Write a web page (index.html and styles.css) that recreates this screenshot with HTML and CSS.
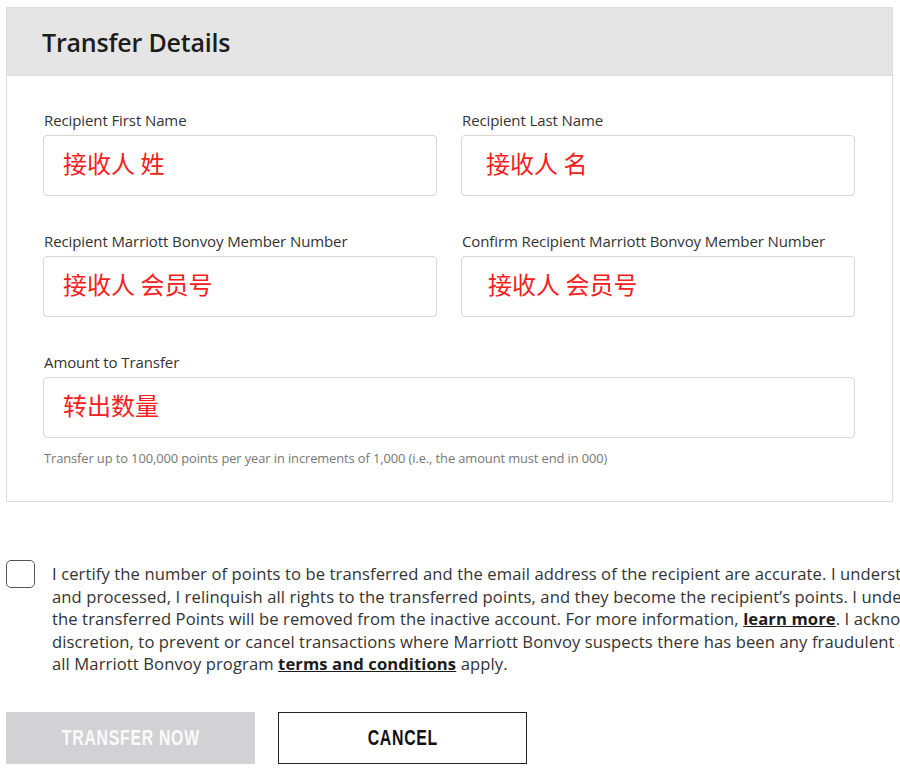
FILE: index.html
```html
<!DOCTYPE html>
<html>
<head>
<meta charset="utf-8">
<link rel="stylesheet" href="styles.css">
</head>
<body>
<div class="page">
  <section class="card">
    <header class="card-head"><h2>Transfer Details</h2></header>
    <div class="card-body">
      <div class="grid">
        <div class="field">
          <label>Recipient First Name</label>
          <div class="input"><span class="val">接收人 姓</span></div>
        </div>
        <div class="field">
          <label>Recipient Last Name</label>
          <div class="input right"><span class="val">接收人 名</span></div>
        </div>
        <div class="field">
          <label>Recipient Marriott Bonvoy Member Number</label>
          <div class="input"><span class="val">接收人 会员号</span></div>
        </div>
        <div class="field">
          <label>Confirm Recipient Marriott Bonvoy Member Number</label>
          <div class="input right2"><span class="val">接收人 会员号</span></div>
        </div>
        <div class="field full">
          <label>Amount to Transfer</label>
          <div class="input"><span class="val">转出数量</span></div>
          <p class="hint">Transfer up to 100,000 points per year in increments of 1,000 (i.e., the amount must end in 000)</p>
        </div>
      </div>
    </div>
  </section>

  <div class="certify">
    <span class="checkbox"></span>
    <p class="legal">I certify the number of points to be transferred and the email address of the recipient are accurate. I understand that once the transfer is submitted<br>and processed, I relinquish all rights to the transferred points, and they become the recipient’s points. I understand that if an account is inactive,<br>the transferred Points will be removed from the inactive account. For more information, <a href="#">learn more</a>. I acknowledge Marriott Bonvoy reserves the right, in its sole<br>discretion, to prevent or cancel transactions where Marriott Bonvoy suspects there has been any fraudulent activity, and<br>all Marriott Bonvoy program <a href="#">terms and conditions</a> apply.</p>
  </div>

  <div class="actions">
    <button class="btn btn-primary" disabled><span class="btn-label">TRANSFER NOW</span></button>
    <button class="btn btn-outline"><span class="btn-label">CANCEL</span></button>
  </div>
</div>
</body>
</html>
```

FILE: styles.css
```css
html, body {
  margin: 0;
  padding: 0;
  background: #fff;
  overflow: hidden;
}
body {
  font-family: "Open Sans", "Liberation Sans", "Noto Sans CJK SC", sans-serif;
  color: #1c1c1c;
}
.page {
  width: 900px;
  overflow: hidden;
  padding: 7px 0 0 6px;
  box-sizing: border-box;
}
.card {
  width: 887px;
  border: 1px solid #dcdcdc;
  box-sizing: border-box;
  height: 495px;
}
.card-head {
  background: #e5e5e5;
  height: 68px;
  display: flex;
  align-items: center;
  padding-left: 35px;
  border-bottom: 1px solid #dedede;
  box-sizing: border-box;
}
.card-head h2 {
  margin: 0;
  font-size: 25px;
  font-weight: 600;
  color: #1c1c1c;
  letter-spacing: -0.2px;
  padding-top: 1px;
}
.card-body {
  padding: 35px 38px 0 36px;
}
.grid {
  display: grid;
  grid-template-columns: 394px 394px;
  column-gap: 24px;
  row-gap: 36px;
}
.field.full {
  grid-column: 1 / span 2;
}
.field label {
  display: block;
  font-size: 15px;
  color: #333;
  line-height: 18px;
  margin-bottom: 6px;
  padding-left: 1px;
  letter-spacing: -0.1px;
}
.input {
  height: 61px;
  border: 1px solid #d6d6d6;
  border-radius: 4px;
  box-sizing: border-box;
  display: flex;
  align-items: center;
  padding-left: 19px;
  padding-bottom: 7px;
}
.input.right { padding-left: 24px; }
.input.right2 { padding-left: 26px; }
.val {
  font-family: "Noto Sans CJK SC", sans-serif;
  font-size: 24px;
  color: #f42020;
}
.hint {
  margin: 11px 0 0 1px;
  font-size: 12.9px;
  color: #777;
  letter-spacing: -0.1px;
}
.certify {
  display: flex;
  align-items: flex-start;
  gap: 17px;
  margin-top: 58px;
}
.checkbox {
  flex: none;
  width: 29px;
  height: 28px;
  border: 1.5px solid #555;
  border-radius: 5px;
  box-sizing: border-box;
  margin-top: 0;
}
.legal {
  margin: 3px 0 0 0;
  font-size: 16.6px;
  line-height: 22.6px;
  color: #333;
  white-space: nowrap;
  letter-spacing: 0.1px;
}
.legal a {
  color: #1c1c1c;
  font-weight: 700;
  text-decoration: underline;
}
.actions {
  display: flex;
  gap: 23px;
  margin-top: 36px;
}
.btn {
  width: 249px;
  height: 52px;
  font-family: "Liberation Sans", sans-serif;
  font-weight: 700;
  font-size: 22px;
  letter-spacing: 1px;
  cursor: pointer;
  padding: 0;
  display: flex;
  align-items: center;
  justify-content: center;
}
.btn-label {
  display: inline-block;
  transform: scaleX(0.72);
  white-space: nowrap;
}
.btn-primary {
  background: #d2d1d3;
  color: #fafafa;
  border: none;
}
.btn-outline {
  background: #fff;
  color: #111;
  border: 1.5px solid #222;
}
```
